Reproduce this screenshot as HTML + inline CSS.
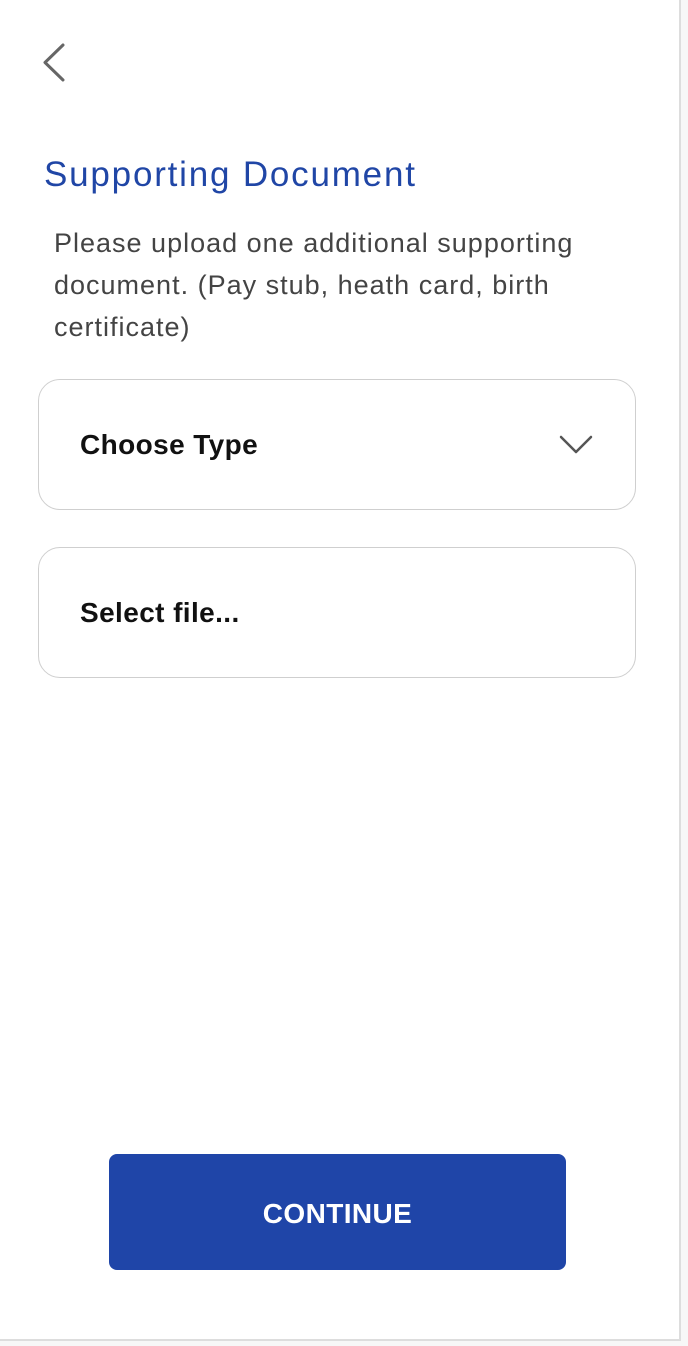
<!DOCTYPE html>
<html><head><meta charset="utf-8"><style>
html,body{margin:0;padding:0}
body{width:688px;height:1346px;background:#f7f7f7;position:relative;overflow:hidden;font-family:"Liberation Sans",sans-serif}
.page{position:absolute;left:0;top:0;width:679px;height:1339px;background:#fff;border-right:2px solid #ddd;border-bottom:2px solid #ddd}
.back{position:absolute;left:40px;top:42px}
h1{position:absolute;left:44px;top:155px;margin:0;font-size:35px;font-weight:normal;color:#2046a6;letter-spacing:1.8px}
.desc{position:absolute;left:54px;top:222px;width:600px;font-size:27px;line-height:42px;color:#444;letter-spacing:1px}
.box{position:absolute;left:38px;width:598px;height:131px;border:1.5px solid #cfcfcf;border-radius:22px;box-sizing:border-box}
.box span{position:absolute;left:41px;top:49px;font-size:28px;font-weight:bold;color:#111;letter-spacing:0.4px}
.btn{position:absolute;left:109px;top:1154px;width:457px;height:116px;background:#1f45a8;border-radius:8px;color:#fff;font-size:28px;font-weight:bold;text-align:center;line-height:119px;letter-spacing:0.4px}
</style></head><body>
<div class="page">
<svg class="back" width="30" height="44" viewBox="40 42 30 44"><path d="M63 45 L45 62.5 L63 80" fill="none" stroke="#666" stroke-width="3" stroke-linecap="round" stroke-linejoin="round"/></svg>
<h1>Supporting Document</h1>
<div class="desc">Please upload one additional supporting document. (Pay stub, heath card, birth certificate)</div>
<div class="box" style="top:379px"><span>Choose Type</span>
<svg style="position:absolute;left:520px;top:55px" width="34" height="20" viewBox="0 0 34 20"><path d="M2 2 L17 17 L32 2" fill="none" stroke="#555" stroke-width="2.5" stroke-linecap="round" stroke-linejoin="round"/></svg></div>
<div class="box" style="top:547px"><span>Select file...</span></div>
<div class="btn">CONTINUE</div>
</div>
</body></html>
